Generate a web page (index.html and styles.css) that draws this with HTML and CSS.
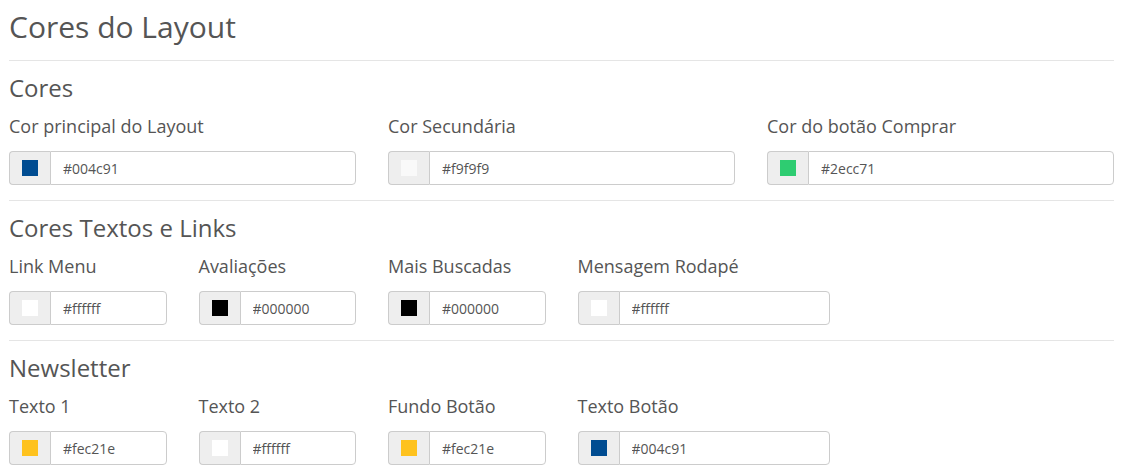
FILE: index.html
```html
<!DOCTYPE html>
<html lang="pt">
<head>
<meta charset="utf-8">
<title>Cores do Layout</title>
<link rel="stylesheet" href="styles.css">
</head>
<body>
<div class="page">
  <h2 class="title">Cores do Layout</h2>

  <section class="group">
    <h3 class="group-title">Cores</h3>
    <div class="row">
      <div class="field span-4">
        <label class="field-label">Cor principal do Layout</label>
        <div class="input-group">
          <span class="addon"><i class="swatch" style="background:#004c91"></i></span>
          <input class="control" type="text" value="#004c91">
        </div>
      </div>
      <div class="field span-4">
        <label class="field-label">Cor Secundária</label>
        <div class="input-group">
          <span class="addon"><i class="swatch" style="background:#f9f9f9"></i></span>
          <input class="control" type="text" value="#f9f9f9">
        </div>
      </div>
      <div class="field span-4">
        <label class="field-label">Cor do botão Comprar</label>
        <div class="input-group">
          <span class="addon"><i class="swatch" style="background:#2ecc71"></i></span>
          <input class="control" type="text" value="#2ecc71">
        </div>
      </div>
    </div>
  </section>

  <section class="group">
    <h3 class="group-title">Cores Textos e Links</h3>
    <div class="row">
      <div class="field span-2">
        <label class="field-label">Link Menu</label>
        <div class="input-group">
          <span class="addon"><i class="swatch" style="background:#ffffff"></i></span>
          <input class="control" type="text" value="#ffffff">
        </div>
      </div>
      <div class="field span-2">
        <label class="field-label">Avaliações</label>
        <div class="input-group">
          <span class="addon"><i class="swatch" style="background:#000000"></i></span>
          <input class="control" type="text" value="#000000">
        </div>
      </div>
      <div class="field span-2">
        <label class="field-label">Mais Buscadas</label>
        <div class="input-group">
          <span class="addon"><i class="swatch" style="background:#000000"></i></span>
          <input class="control" type="text" value="#000000">
        </div>
      </div>
      <div class="field span-3">
        <label class="field-label">Mensagem Rodapé</label>
        <div class="input-group">
          <span class="addon"><i class="swatch" style="background:#ffffff"></i></span>
          <input class="control" type="text" value="#ffffff">
        </div>
      </div>
    </div>
  </section>

  <section class="group">
    <h3 class="group-title">Newsletter</h3>
    <div class="row">
      <div class="field span-2">
        <label class="field-label">Texto 1</label>
        <div class="input-group">
          <span class="addon"><i class="swatch" style="background:#fec21e"></i></span>
          <input class="control" type="text" value="#fec21e">
        </div>
      </div>
      <div class="field span-2">
        <label class="field-label">Texto 2</label>
        <div class="input-group">
          <span class="addon"><i class="swatch" style="background:#ffffff"></i></span>
          <input class="control" type="text" value="#ffffff">
        </div>
      </div>
      <div class="field span-2">
        <label class="field-label">Fundo Botão</label>
        <div class="input-group">
          <span class="addon"><i class="swatch" style="background:#fec21e"></i></span>
          <input class="control" type="text" value="#fec21e">
        </div>
      </div>
      <div class="field span-3">
        <label class="field-label">Texto Botão</label>
        <div class="input-group">
          <span class="addon"><i class="swatch" style="background:#004c91"></i></span>
          <input class="control" type="text" value="#004c91">
        </div>
      </div>
    </div>
  </section>
</div>
</body>
</html>
```

FILE: styles.css
```css
* { box-sizing: border-box; }

html, body {
  margin: 0;
  padding: 0;
  background: #ffffff;
}

body {
  font-family: "Open Sans", "DejaVu Sans", sans-serif;
  color: #555555;
}

.page {
  width: 1105px;
  margin-left: 9px;
  padding-top: 9px;
}

.title {
  margin: 0;
  font-size: 30px;
  line-height: 36px;
  font-weight: 400;
  color: #555555;
  padding-bottom: 15px;
}

.group {
  border-top: 1px solid #e5e5e5;
  padding-top: 14px;
  padding-bottom: 15px;
}

.group-title {
  margin: 0 0 15px;
  font-size: 24px;
  line-height: 26px;
  font-weight: 400;
  color: #555555;
}

.row {
  display: grid;
  grid-template-columns: repeat(12, 1fr);
  column-gap: 32px;
}

.span-2 { grid-column: span 2; }
.span-3 { grid-column: span 3; }
.span-4 { grid-column: span 4; }

.field {
  display: flex;
  flex-direction: column;
}

.field-label {
  display: block;
  font-size: 18px;
  line-height: 20px;
  color: #555555;
  margin-bottom: 15px;
}

.input-group {
  display: flex;
  height: 34px;
}

.addon {
  flex: none;
  display: flex;
  align-items: center;
  padding: 0 12px;
  background: #eeeeee;
  border: 1px solid #cccccc;
  border-right: 0;
  border-radius: 4px 0 0 4px;
}

.swatch {
  display: block;
  width: 16px;
  height: 16px;
}

.control {
  flex: 1;
  min-width: 0;
  height: 34px;
  margin: 0;
  padding: 6px 12px;
  font-family: "Open Sans", "DejaVu Sans", sans-serif;
  font-size: 14px;
  color: #555555;
  background: #ffffff;
  border: 1px solid #cccccc;
  border-radius: 0 4px 4px 0;
  outline: none;
}
```
